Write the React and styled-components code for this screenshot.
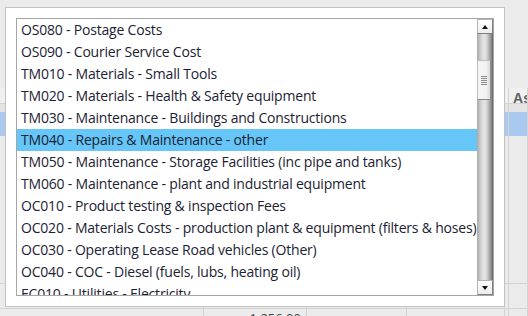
import React from 'react'
import styled, { createGlobalStyle } from 'styled-components'

const GlobalStyle = createGlobalStyle`
  html, body {
    margin: 0;
    padding: 0;
  }
  body {
    width: 528px;
    height: 316px;
    overflow: hidden;
    background: #ebebeb;
    font-family: "Open Sans", "Liberation Sans", sans-serif;
  }
`

const accounts = [
  'OS080 - Postage Costs',
  'OS090 - Courier Service Cost',
  'TM010 - Materials - Small Tools',
  'TM020 - Materials - Health & Safety equipment',
  'TM030 - Maintenance - Buildings and Constructions',
  'TM040 - Repairs & Maintenance - other',
  'TM050 - Maintenance - Storage Facilities (inc pipe and tanks)',
  'TM060 - Maintenance - plant and industrial equipment',
  'OC010 - Product testing & inspection Fees',
  'OC020 - Materials Costs - production plant & equipment (filters & hoses)',
  'OC030 - Operating Lease Road vehicles (Other)',
  'OC040 - COC - Diesel (fuels, lubs, heating oil)',
  'EC010 - Utilities - Electricity',
]

const SELECTED = 'TM040 - Repairs & Maintenance - other'

// column widths of the grid that sits behind the popup
const columns = [204, 103, 100, 98, 4, 19]

export default function App() {
  return (
    <>
      <GlobalStyle />
      <Page>
        <Grid>
          <GridRow height={88} />
          <GridRow height={16} tone='header' lined>
            {columns.map((w, i) => (
              <Cell key={i} width={w} lined>
                {i === columns.length - 1 && <HeaderText>As</HeaderText>}
              </Cell>
            ))}
          </GridRow>
          <GridRow height={8} tone='sub'>
            {columns.map((w, i) => <Cell key={i} width={w} lined />)}
          </GridRow>
          <GridRow height={24} tone='selected'>
            {columns.map((w, i) => <Cell key={i} width={w} lined />)}
          </GridRow>
          <GridRow height={148} lined>
            {columns.map((w, i) => <Cell key={i} width={w} lined />)}
          </GridRow>
          <GridRow height={25} lined>
            {columns.map((w, i) => <Cell key={i} width={w} lined />)}
          </GridRow>
          <GridRow height={20}>
            {columns.map((w, i) => (
              <Cell key={i} width={w} lined>
                {i === 1 && <Amount>1,256.00</Amount>}
              </Cell>
            ))}
          </GridRow>
        </Grid>

        <Popup>
          <ListBox>
            <Items>
              {accounts.map((a) => (
                <Item key={a} selected={a === SELECTED}>{a}</Item>
              ))}
            </Items>
            <Scrollbar>
              <ArrowButton><Arrow dir='up' /></ArrowButton>
              <Track>
                <Thumb offset={26}>
                  <Grip>
                    <span /><span /><span /><span /><span />
                  </Grip>
                </Thumb>
              </Track>
              <ArrowButton><Arrow dir='down' /></ArrowButton>
            </Scrollbar>
          </ListBox>
        </Popup>
      </Page>
    </>
  )
}

const Page = styled.div`
  position: relative;
  width: 528px;
  height: 316px;
  overflow: hidden;
  background: #ebebeb;
`

const Grid = styled.div`
  display: flex;
  flex-direction: column;
  width: 528px;
`

const rowColors = {
  header: '#f0f0f0',
  sub: '#e4e4e4',
  selected: '#a9c9f1',
}

const GridRow = styled.div`
  display: flex;
  flex-shrink: 0;
  height: ${(p) => p.height}px;
  box-sizing: border-box;
  background: ${(p) => rowColors[p.tone] || '#ebebeb'};
  border-bottom: ${(p) => (p.lined ? '1px solid #d3d3d3' : 'none')};
`

const Cell = styled.div`
  width: ${(p) => p.width}px;
  flex-shrink: 0;
  box-sizing: border-box;
  border-right: ${(p) => (p.lined ? '1px solid #d3d3d3' : 'none')};
  display: flex;
  align-items: flex-start;
  justify-content: flex-end;
  overflow: hidden;
`

const HeaderText = styled.span`
  font-family: "Liberation Sans", Arial, sans-serif;
  font-weight: bold;
  font-size: 14px;
  line-height: 16px;
  color: #5f6266;
  margin-right: -4px;
  margin-top: 2px;
`

const Amount = styled.span`
  font-size: 13px;
  line-height: 16px;
  color: #444;
  margin-right: 5px;
  margin-top: 1px;
`

const Popup = styled.div`
  position: absolute;
  left: 5px;
  top: 7px;
  width: 500px;
  height: 300px;
  box-sizing: border-box;
  padding: 10px;
  background: #ffffff;
  border: 1px solid #c2c2c2;
`

const ListBox = styled.div`
  display: flex;
  height: 100%;
  box-sizing: border-box;
  border: 1px solid #a6a6a6;
  background: #ffffff;
  overflow: hidden;
`

const Items = styled.div`
  flex: 1;
  min-width: 0;
  overflow: hidden;
`

const Item = styled.div`
  height: 22px;
  line-height: 22px;
  padding-left: 4px;
  font-size: 14px;
  letter-spacing: -0.2px;
  color: #1b2233;
  white-space: nowrap;
  overflow: hidden;
  background: ${(p) => (p.selected ? '#66c6f8' : 'transparent')};
`

const Scrollbar = styled.div`
  width: 16px;
  flex-shrink: 0;
  display: flex;
  flex-direction: column;
`

const ArrowButton = styled.div`
  height: 15px;
  flex-shrink: 0;
  box-sizing: border-box;
  display: flex;
  align-items: center;
  justify-content: center;
  background: linear-gradient(#ffffff, #ececec);
  border: 1px solid #b4b4b4;
  border-right-color: #7e7e7e;
  border-bottom-color: #7e7e7e;
`

const Arrow = styled.span`
  width: 0;
  height: 0;
  border-left: 3.5px solid transparent;
  border-right: 3.5px solid transparent;
  ${(p) =>
    p.dir === 'up'
      ? 'border-bottom: 4px solid #111;'
      : 'border-top: 4px solid #111;'}
`

const Track = styled.div`
  flex: 1;
  box-sizing: border-box;
  border-right: 1px solid #6e6e6e;
  background: linear-gradient(
    to right,
    #a8a8a8 0%,
    #cfcfcf 25%,
    #e6e6e6 45%,
    #d6d6d6 65%,
    #a4a4a4 85%,
    #808080 100%
  );
`

const Thumb = styled.div`
  margin-top: ${(p) => p.offset}px;
  height: 40px;
  width: 14px;
  box-sizing: border-box;
  border: 1px solid #bdbdbd;
  border-right-color: #8a8a8a;
  border-bottom-color: #8a8a8a;
  border-radius: 2px;
  background: linear-gradient(to right, #f6f6f6, #f0f0f0 70%, #dcdcdc);
  display: flex;
  align-items: center;
  justify-content: center;
`

const Grip = styled.div`
  display: flex;
  flex-direction: column;
  gap: 1px;

  span {
    display: block;
    width: 6px;
    height: 1px;
    background: #8c8c8c;
  }
`
